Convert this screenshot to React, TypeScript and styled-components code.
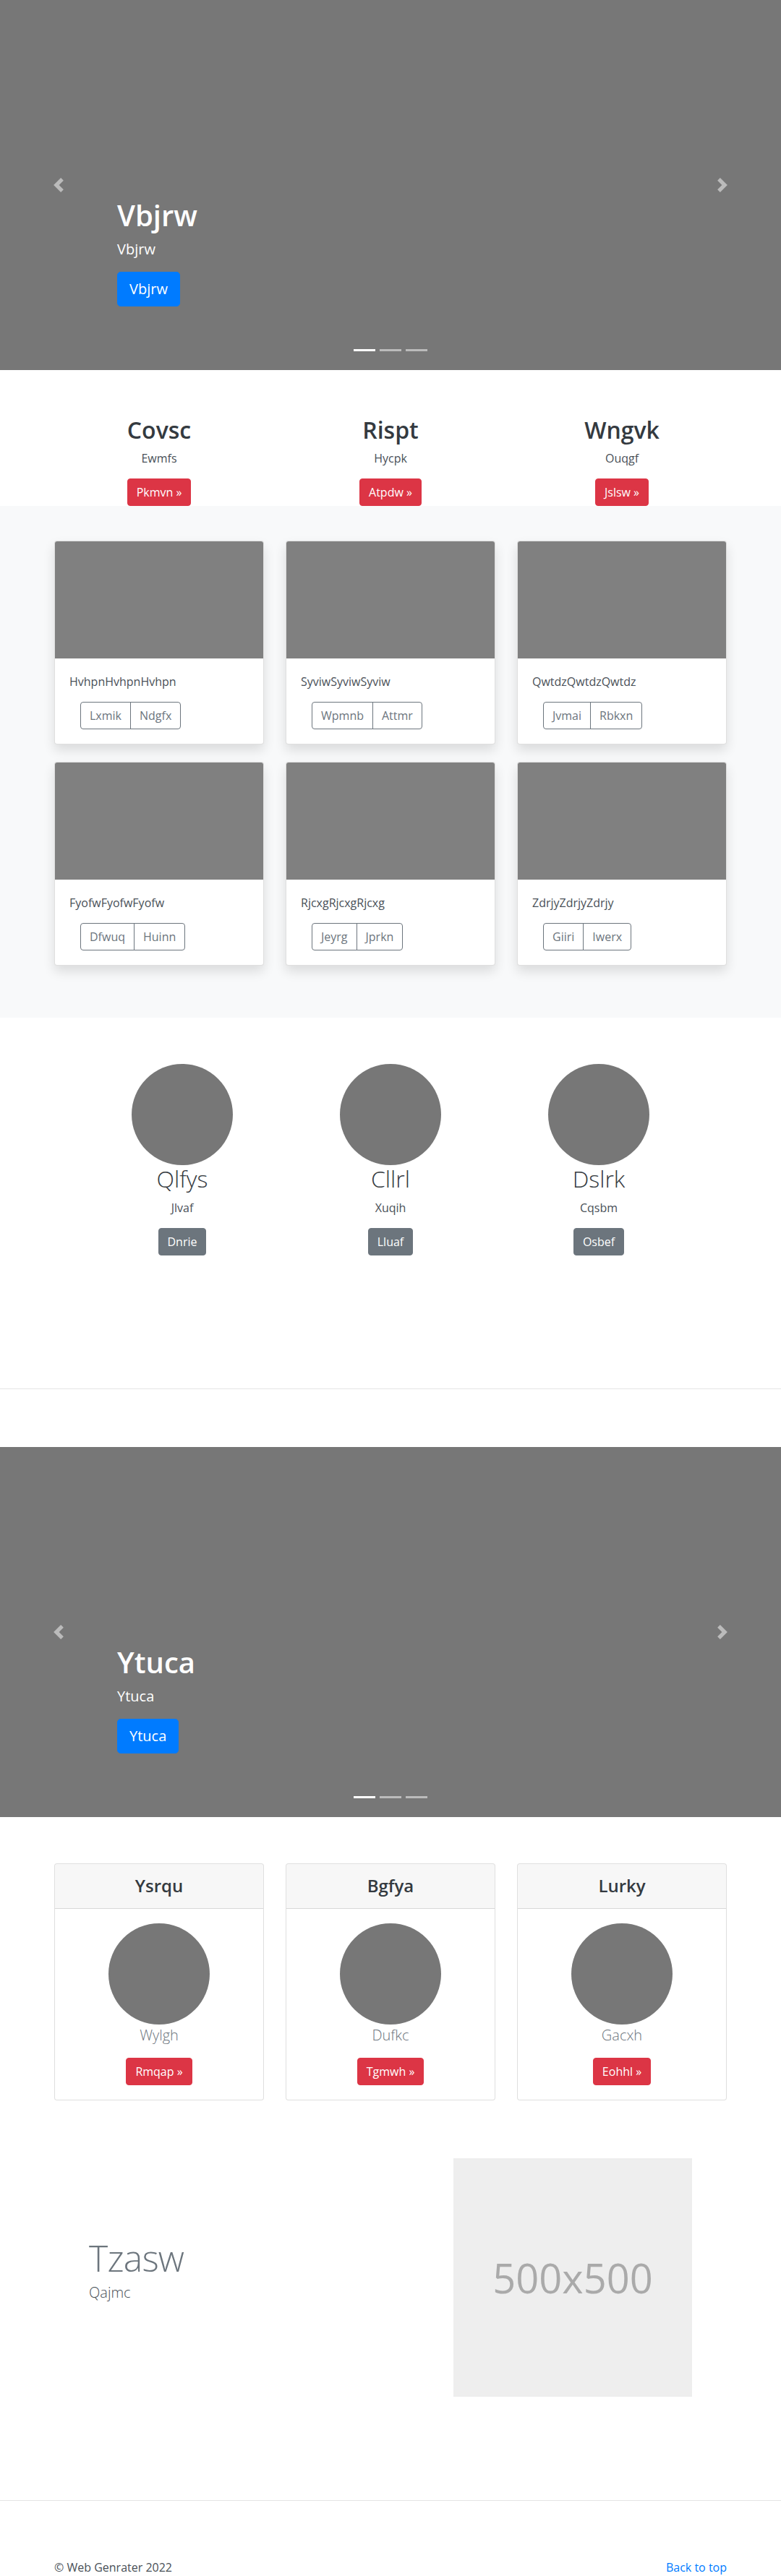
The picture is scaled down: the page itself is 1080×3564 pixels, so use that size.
import React from "react";
import styled, { createGlobalStyle, css } from "styled-components";

const GlobalStyle = createGlobalStyle`
  *, *::before, *::after { box-sizing: border-box; }
  html, body { margin: 0; padding: 0; }
  body {
    font-family: "Segoe UI", "Open Sans", "Noto Sans", Arial, sans-serif;
    font-size: 16px;
    line-height: 1.5;
    color: #212529;
    background: #fff;
  }
  h1, h2, h3, h4, h5, p { margin: 0; }
`;

/* ---------- shared ---------- */

const Container = styled.div`
  max-width: 960px;
  margin: 0 auto;
  padding: 0 15px;
`;

const WideContainer = styled.div`
  max-width: 960px;
  margin: 0 auto;
  padding: 0 48px;
`;

const ThreeCols = styled.div<{ $rowGap?: number }>`
  display: grid;
  grid-template-columns: repeat(3, 1fr);
  column-gap: 30px;
  row-gap: ${(p) => p.$rowGap ?? 0}px;
`;

type Variant = "primary" | "danger" | "secondary";

const variantColors: Record<Variant, string> = {
  primary: "#007bff",
  danger: "#dc3545",
  secondary: "#6c757d",
};

const Button = styled.a<{ $variant: Variant; $large?: boolean }>`
  display: inline-block;
  font-weight: 400;
  text-align: center;
  text-decoration: none;
  white-space: nowrap;
  color: #fff;
  background: ${(p) => variantColors[p.$variant]};
  border: 1px solid ${(p) => variantColors[p.$variant]};
  ${(p) =>
    p.$large
      ? css`
          padding: 8px 16px;
          font-size: 20px;
          line-height: 1.5;
          border-radius: 4.8px;
        `
      : css`
          padding: 6px 12px;
          font-size: 16px;
          line-height: 1.5;
          border-radius: 4px;
        `}
`;

const ButtonRow = styled.div<{ $center?: boolean; $gapBelow?: number }>`
  display: flex;
  justify-content: ${(p) => (p.$center ? "center" : "flex-start")};
  margin-bottom: ${(p) => p.$gapBelow ?? 0}px;
`;

const Divider = styled.hr`
  border: 0;
  border-top: 1px solid rgba(0, 0, 0, 0.1);
  margin: 80px 0;
`;

/* ---------- carousel ---------- */

const CarouselFrame = styled.section`
  position: relative;
  height: 512px;
  background: #777;
  margin-bottom: 64px;
  overflow: hidden;
`;

const Caption = styled.div`
  position: absolute;
  left: 15%;
  right: 15%;
  bottom: 52px;
  padding: 20px 0;
  color: #fff;
  text-align: left;
  z-index: 10;
`;

const CaptionTitle = styled.h1`
  font-size: 40px;
  font-weight: 600;
  line-height: 1.2;
  margin: 0 0 8px;
`;

const CaptionText = styled.p`
  font-size: 20px;
  line-height: 1.5;
  margin: 0 0 16px;
`;

const Control = styled.a<{ $side: "left" | "right" }>`
  position: absolute;
  top: 0;
  bottom: 0;
  ${(p) => (p.$side === "left" ? "left: 0;" : "right: 0;")}
  width: 15%;
  display: flex;
  align-items: center;
  justify-content: center;
  opacity: 0.5;
  z-index: 5;
`;

const Indicators = styled.ol`
  position: absolute;
  left: 0;
  right: 0;
  bottom: 0;
  margin: 0 0 16px;
  padding: 0;
  list-style: none;
  display: flex;
  justify-content: center;
  z-index: 15;
`;

const Indicator = styled.li<{ $active?: boolean }>`
  width: 30px;
  height: 3px;
  box-sizing: content-box;
  margin: 0 3px;
  border-top: 10px solid transparent;
  border-bottom: 10px solid transparent;
  background-color: #fff;
  background-clip: padding-box;
  opacity: ${(p) => (p.$active ? 1 : 0.5)};
`;

const Chevron = ({ dir }: { dir: "prev" | "next" }) => (
  <svg width="20" height="20" viewBox="0 0 8 8" fill="#fff" aria-hidden="true">
    <path
      d={
        dir === "prev"
          ? "M5.25 0l-4 4 4 4 1.5-1.5L4.25 4l2.5-2.5L5.25 0z"
          : "M2.75 0l-1.5 1.5L3.75 4l-2.5 2.5L2.75 8l4-4-4-4z"
      }
    />
  </svg>
);

const Carousel = ({ label }: { label: string }) => (
  <CarouselFrame>
    <Indicators>
      <Indicator $active />
      <Indicator />
      <Indicator />
    </Indicators>
    <Caption>
      <CaptionTitle>{label}</CaptionTitle>
      <CaptionText>{label}</CaptionText>
      <ButtonRow $gapBelow={16}>
        <Button href="#" $variant="primary" $large>
          {label}
        </Button>
      </ButtonRow>
    </Caption>
    <Control href="#" $side="left">
      <Chevron dir="prev" />
    </Control>
    <Control href="#" $side="right">
      <Chevron dir="next" />
    </Control>
  </CarouselFrame>
);

/* ---------- marketing ---------- */

const MarketingItem = styled.div`
  text-align: center;
`;

const MarketingTitle = styled.h2`
  font-size: 32px;
  font-weight: 600;
  line-height: 1.2;
  margin: 0 0 8px;
  color: #343a40;
`;

const BodyText = styled.p`
  margin: 0 0 16px;
`;

/* ---------- album ---------- */

const AlbumSection = styled.section`
  background: #f8f9fa;
  padding: 48px 0 72px;
`;

const AlbumCard = styled.div`
  background: #fff;
  border: 1px solid rgba(0, 0, 0, 0.125);
  border-radius: 4px;
  overflow: hidden;
  box-shadow: 0 8px 16px rgba(0, 0, 0, 0.12);
`;

const CardImage = styled.div`
  aspect-ratio: 16 / 9;
  background: #808080;
`;

const CardBody = styled.div<{ $center?: boolean }>`
  padding: 20px;
  text-align: ${(p) => (p.$center ? "center" : "left")};
`;

const CardText = styled.p`
  margin: 0 0 16px;
  color: #495057;
`;

const ButtonGroup = styled.div`
  display: inline-flex;
  margin-left: 15px;
`;

const GroupButton = styled.a`
  display: inline-block;
  padding: 6px 12px;
  font-size: 16px;
  line-height: 1.5;
  color: #6c757d;
  text-decoration: none;
  border: 1px solid #6c757d;
  background: transparent;
  &:first-child {
    border-radius: 4px 0 0 4px;
  }
  &:last-child {
    border-radius: 0 4px 4px 0;
  }
  & + & {
    margin-left: -1px;
  }
`;

/* ---------- team ---------- */

const TeamSection = styled.section`
  padding: 64px 0 104px;
`;

const TeamGrid = styled.div`
  display: grid;
  grid-template-columns: repeat(3, 1fr);
`;

const TeamMember = styled.div`
  text-align: center;
  padding: 0 15px;
`;

const Avatar = styled.div`
  width: 140px;
  height: 140px;
  border-radius: 50%;
  background: #777;
  margin: 0 auto;
`;

const TeamName = styled.h2`
  font-size: 32px;
  font-weight: 300;
  line-height: 1.2;
  margin: 0 0 8px;
  color: #343a40;
`;

/* ---------- pricing ---------- */

const PriceCard = styled.div`
  background: #fff;
  border: 1px solid rgba(0, 0, 0, 0.125);
  border-radius: 4px;
  overflow: hidden;
`;

const PriceHeader = styled.div`
  background: rgba(0, 0, 0, 0.03);
  border-bottom: 1px solid rgba(0, 0, 0, 0.125);
  padding: 16px 20px;
  text-align: center;
`;

const PriceTitle = styled.h4`
  font-size: 24px;
  font-weight: 600;
  line-height: 1.2;
  margin: 0;
  color: #343a40;
`;

const Lead = styled.p<{ $muted?: boolean }>`
  font-size: 20px;
  font-weight: 300;
  line-height: 1.5;
  margin: 0 0 16px;
  color: ${(p) => (p.$muted ? "#6c757d" : "#495057")};
`;

/* ---------- featurette ---------- */

const FeatureSection = styled.section`
  padding: 80px 0 63px;
`;

const FeatureRow = styled.div`
  display: grid;
  grid-template-columns: 7fr 5fr;
  align-items: center;
`;

const FeatureCol = styled.div`
  padding: 0 15px;
`;

const FeatureHeading = styled.h2`
  font-size: 50px;
  font-weight: 300;
  line-height: 1;
  letter-spacing: -0.8px;
  color: #6c757d;
  margin: 0 0 8px;
`;

const Placeholder = styled.div`
  width: 100%;
  aspect-ratio: 1 / 1;
  background: #eee;
  color: #aaa;
  font-size: 56px;
  display: flex;
  align-items: center;
  justify-content: center;
`;

/* ---------- footer ---------- */

const Footer = styled.footer`
  display: flex;
  justify-content: space-between;
  color: #495057;
`;

const FooterLink = styled.a`
  color: #007bff;
  text-decoration: none;
`;

/* ---------- data ---------- */

const marketing = [
  { title: "Covsc", text: "Ewmfs", btn: "Pkmvn" },
  { title: "Rispt", text: "Hycpk", btn: "Atpdw" },
  { title: "Wngvk", text: "Ouqgf", btn: "Jslsw" },
];

const album = [
  { text: "HvhpnHvhpnHvhpn", a: "Lxmik", b: "Ndgfx" },
  { text: "SyviwSyviwSyviw", a: "Wpmnb", b: "Attmr" },
  { text: "QwtdzQwtdzQwtdz", a: "Jvmai", b: "Rbkxn" },
  { text: "FyofwFyofwFyofw", a: "Dfwuq", b: "Huinn" },
  { text: "RjcxgRjcxgRjcxg", a: "Jeyrg", b: "Jprkn" },
  { text: "ZdrjyZdrjyZdrjy", a: "Giiri", b: "Iwerx" },
];

const team = [
  { name: "Qlfys", role: "Jlvaf", btn: "Dnrie" },
  { name: "Cllrl", role: "Xuqih", btn: "Lluaf" },
  { name: "Dslrk", role: "Cqsbm", btn: "Osbef" },
];

const pricing = [
  { title: "Ysrqu", text: "Wylgh", btn: "Rmqap" },
  { title: "Bgfya", text: "Dufkc", btn: "Tgmwh" },
  { title: "Lurky", text: "Gacxh", btn: "Eohhl" },
];

export default function App() {
  return (
    <>
      <GlobalStyle />
      <Carousel label="Vbjrw" />

      <Container>
        <ThreeCols>
          {marketing.map((m) => (
            <MarketingItem key={m.title}>
              <MarketingTitle>{m.title}</MarketingTitle>
              <CardText>{m.text}</CardText>
              <ButtonRow $center>
                <Button href="#" $variant="danger">
                  {m.btn} &raquo;
                </Button>
              </ButtonRow>
            </MarketingItem>
          ))}
        </ThreeCols>
      </Container>

      <AlbumSection>
        <Container>
          <ThreeCols $rowGap={24}>
            {album.map((c) => (
              <AlbumCard key={c.text}>
                <CardImage />
                <CardBody>
                  <CardText>{c.text}</CardText>
                  <ButtonGroup>
                    <GroupButton href="#">{c.a}</GroupButton>
                    <GroupButton href="#">{c.b}</GroupButton>
                  </ButtonGroup>
                </CardBody>
              </AlbumCard>
            ))}
          </ThreeCols>
        </Container>
      </AlbumSection>

      <TeamSection>
        <WideContainer>
          <TeamGrid>
            {team.map((t) => (
              <TeamMember key={t.name}>
                <Avatar />
                <TeamName>{t.name}</TeamName>
                <CardText>{t.role}</CardText>
                <ButtonRow $center>
                  <Button href="#" $variant="secondary">
                    {t.btn}
                  </Button>
                </ButtonRow>
              </TeamMember>
            ))}
          </TeamGrid>
        </WideContainer>
      </TeamSection>

      <Divider />

      <Carousel label="Ytuca" />

      <Container>
        <ThreeCols>
          {pricing.map((p) => (
            <PriceCard key={p.title}>
              <PriceHeader>
                <PriceTitle>{p.title}</PriceTitle>
              </PriceHeader>
              <CardBody $center>
                <Avatar />
                <Lead $muted>{p.text}</Lead>
                <ButtonRow $center>
                  <Button href="#" $variant="danger">
                    {p.btn} &raquo;
                  </Button>
                </ButtonRow>
              </CardBody>
            </PriceCard>
          ))}
        </ThreeCols>
      </Container>

      <FeatureSection>
        <WideContainer>
          <FeatureRow>
            <FeatureCol>
              <FeatureHeading>Tzasw</FeatureHeading>
              <Lead>Qajmc</Lead>
            </FeatureCol>
            <FeatureCol>
              <Placeholder>500x500</Placeholder>
            </FeatureCol>
          </FeatureRow>
        </WideContainer>
      </FeatureSection>

      <Divider />

      <Container>
        <Footer>
          <BodyText>© Web Genrater 2022</BodyText>
          <BodyText>
            <FooterLink href="#">Back to top</FooterLink>
          </BodyText>
        </Footer>
      </Container>
    </>
  );
}
